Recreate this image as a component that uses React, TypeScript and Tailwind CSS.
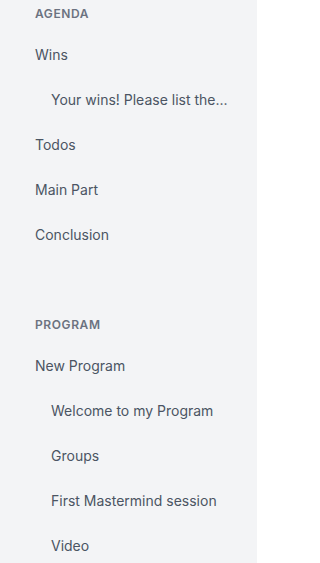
import React from 'react';

type Item = { label: string; sub?: boolean };

const sections: { title: string; items: Item[] }[] = [
  {
    title: 'Agenda',
    items: [
      { label: 'Wins' },
      { label: 'Your wins! Please list the...', sub: true },
      { label: 'Todos' },
      { label: 'Main Part' },
      { label: 'Conclusion' },
    ],
  },
  {
    title: 'Program',
    items: [
      { label: 'New Program' },
      { label: 'Welcome to my Program', sub: true },
      { label: 'Groups', sub: true },
      { label: 'First Mastermind session', sub: true },
      { label: 'Video', sub: true },
    ],
  },
];

const App = () => {
  return (
    <div className="min-h-screen w-[257px] bg-[#f3f4f6] pl-[35px] pr-[22px] font-['Inter',sans-serif] overflow-hidden">
      <div className="flex flex-col gap-[54px]">
        {sections.map((section) => (
          <div key={section.title}>
            <div className="h-[28px] flex items-center text-[12px] font-semibold uppercase tracking-wider text-[#6b7280]">
              {section.title}
            </div>
            <ul className="mt-[4px]">
              {section.items.map((item) => (
                <li
                  key={item.label}
                  className={`h-[45px] flex items-center text-[14px] text-[#4b5563] ${item.sub ? 'pl-4' : ''}`}
                >
                  <span className="whitespace-nowrap">{item.label}</span>
                </li>
              ))}
            </ul>
          </div>
        ))}
      </div>
    </div>
  );
};

export default App;
